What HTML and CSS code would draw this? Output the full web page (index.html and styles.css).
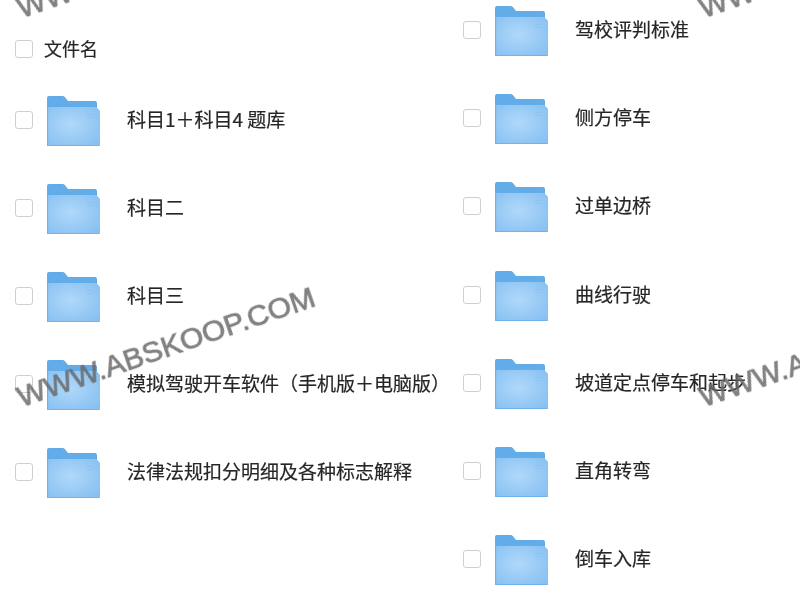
FILE: index.html
```html
<!DOCTYPE html>
<html lang="zh">
<head>
<meta charset="utf-8">
<title>文件列表</title>
<link rel="stylesheet" href="styles.css">
</head>
<body>
<svg class="defs" width="0" height="0" aria-hidden="true">
  <defs>
    <radialGradient id="front" cx="0.45" cy="0.45" r="0.7">
      <stop offset="0" stop-color="#b0d8f9"/>
      <stop offset="1" stop-color="#86c0f2"/>
    </radialGradient>
    <symbol id="folder" viewBox="0 0 53 50">
      <path d="M0 2a2 2 0 0 1 2-2h13.500a3 3 0 0 1 2.300 1L21 5h27a2 2 0 0 1 2 2v8H0z" fill="#62ace9"/>
      <path d="M0 11h49.500L53 15v33a2 2 0 0 1-2 2H0z" fill="url(#front)"/>
      <path d="M0 11h1.200v39H0z" fill="#6ab2eb"/>
      <path d="M0 49h53v.2a.8.8 0 0 1-.8.8H0z" fill="#6fb4ed"/>
      <path d="M40 18h8v1h-8zM40 21h6v1h-6z" fill="#8fc2ee"/>
    </symbol>
  </defs>
</svg>
<main class="page">
  <section class="col col-left">
    <div class="head"><span class="check"></span><span class="head-name">文件名</span></div>
    <div class="row"><span class="check"></span><svg class="folder"><use href="#folder"/></svg><span class="name">科目1＋科目4 题库</span></div>
    <div class="row"><span class="check"></span><svg class="folder"><use href="#folder"/></svg><span class="name">科目二</span></div>
    <div class="row"><span class="check"></span><svg class="folder"><use href="#folder"/></svg><span class="name">科目三</span></div>
    <div class="row"><span class="check"></span><svg class="folder"><use href="#folder"/></svg><span class="name">模拟驾驶开车软件（手机版＋电脑版）</span></div>
    <div class="row"><span class="check"></span><svg class="folder"><use href="#folder"/></svg><span class="name">法律法规扣分明细及各种标志解释</span></div>
  </section>
  <section class="col col-right">
    <div class="row"><span class="check"></span><svg class="folder"><use href="#folder"/></svg><span class="name">驾校评判标准</span></div>
    <div class="row"><span class="check"></span><svg class="folder"><use href="#folder"/></svg><span class="name">侧方停车</span></div>
    <div class="row"><span class="check"></span><svg class="folder"><use href="#folder"/></svg><span class="name">过单边桥</span></div>
    <div class="row"><span class="check"></span><svg class="folder"><use href="#folder"/></svg><span class="name">曲线行驶</span></div>
    <div class="row"><span class="check"></span><svg class="folder"><use href="#folder"/></svg><span class="name">坡道定点停车和起步</span></div>
    <div class="row"><span class="check"></span><svg class="folder"><use href="#folder"/></svg><span class="name">直角转弯</span></div>
    <div class="row"><span class="check"></span><svg class="folder"><use href="#folder"/></svg><span class="name">倒车入库</span></div>
  </section>
</main>
<div class="mark mark-a">WWW.ABSKOOP.COM</div>
<div class="mark mark-b">WWW.ABSKOOP.COM</div>
<div class="mark mark-c">WWW.ABSKOOP.COM</div>
<div class="mark mark-d">WWW.ABSKOOP.COM</div>
</body>
</html>
```
FILE: styles.css
```css
html, body {
  margin: 0;
  padding: 0;
  height: 603px;
  overflow: hidden;
  background: #fff;
}

body {
  position: relative;
  font-family: "Noto Sans CJK SC", "Noto Sans", sans-serif;
  color: #262626;
}

.defs {
  position: absolute;
}

.page {
  display: grid;
  grid-template-columns: 448px 352px;
  align-items: start;
  filter: blur(0.55px);
}

.col-left {
  padding-top: 22px;
}

.col-right {
  margin-top: -14px;
}

.head {
  display: flex;
  align-items: center;
  height: 54px;
  padding-left: 15px;
}

.head-name {
  margin-left: 11px;
  margin-bottom: 2px;
  font-size: 18px;
  -webkit-text-stroke: 0.2px #262626;
}

.row {
  display: flex;
  align-items: center;
  height: 88px;
  padding-left: 15px;
}

.col-right .row {
  height: 88.17px;
}

.check {
  flex: none;
  box-sizing: border-box;
  width: 18px;
  height: 18px;
  border: 1px solid #cfcfcf;
  border-radius: 3px;
  background: #fff;
}

.folder {
  flex: none;
  width: 53px;
  height: 50px;
  margin-left: 14px;
  margin-top: 2px;
}

.name {
  margin-left: 27px;
  margin-bottom: 3px;
  font-size: 19px;
  white-space: nowrap;
  -webkit-text-stroke: 0.2px #262626;
}

.mark {
  position: absolute;
  font-family: "Liberation Sans", Arial, sans-serif;
  font-size: 30px;
  line-height: 36px;
  color: rgba(105, 105, 105, 0.82);
  -webkit-text-stroke: 0.7px rgba(105, 105, 105, 0.82);
  white-space: nowrap;
  transform: rotate(-19deg);
  transform-origin: 0 100%;
  filter: blur(0.5px);
}

.mark-a { left: 24px;  top: 379px; }
.mark-b { left: 706px; top: 379px; }
.mark-c { left: 24px;  top: -10px; }
.mark-d { left: 706px; top: -10px; }
```
